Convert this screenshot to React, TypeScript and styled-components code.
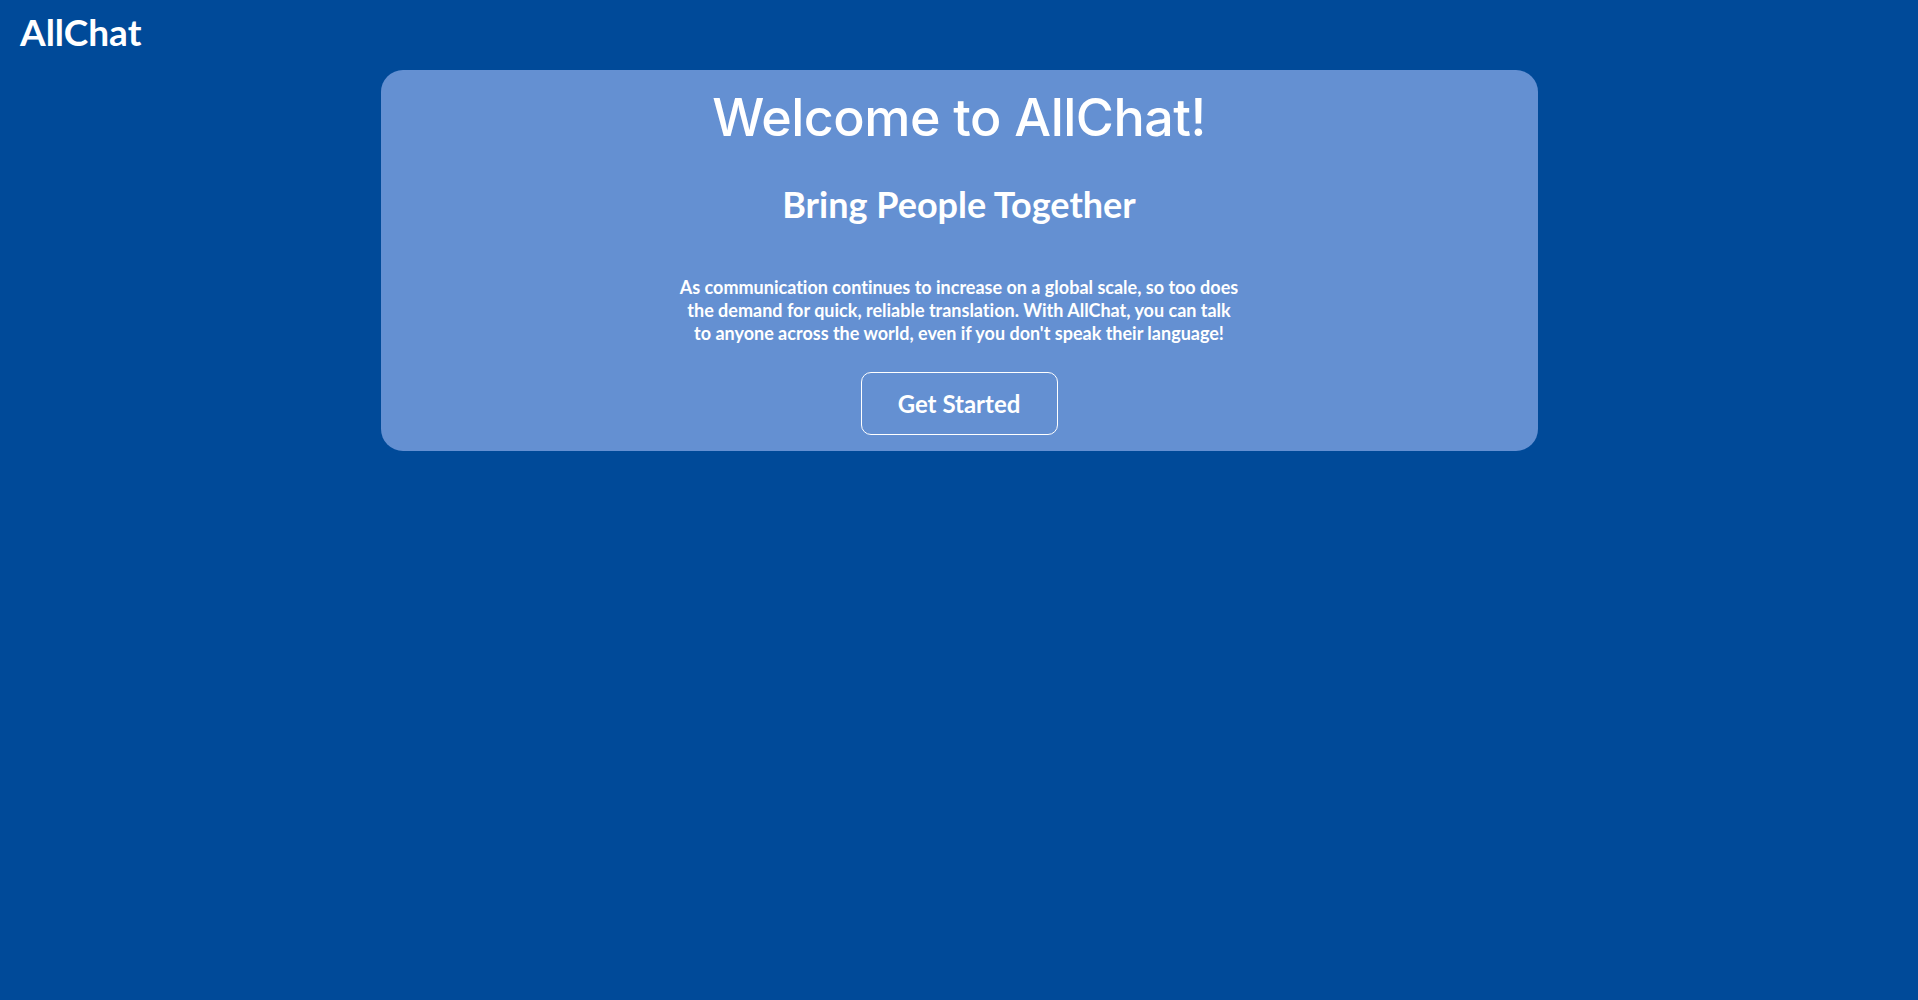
import React from "react";
import styled, { createGlobalStyle } from "styled-components";

const Global = createGlobalStyle`
  html, body {
    margin: 0;
    padding: 0;
    background: #004a99;
    min-height: 100%;
  }
  body {
    font-family: Lato, "Liberation Sans", sans-serif;
    color: #ffffff;
    font-variant-ligatures: none;
  }
`;

const Page = styled.div`
  min-height: 1000px;
  background: #004a99;
  display: flex;
  flex-direction: column;
`;

const Header = styled.header`
  height: 70px;
  display: flex;
  align-items: flex-start;
  padding: 10px 20px 0;
  box-sizing: border-box;
`;

const Logo = styled.div`
  font-family: Lato, sans-serif;
  font-weight: 700;
  font-size: 37px;
  line-height: 44px;
  color: #ffffff;
`;

const Card = styled.main`
  width: 1157px;
  margin: 0 auto;
  box-sizing: border-box;
  background: #6490d2;
  border-radius: 22px;
  display: flex;
  flex-direction: column;
  align-items: center;
  padding: 12px 0 16px;
`;

const Title = styled.h1`
  margin: 0;
  font-family: Inter, "Noto Sans", sans-serif;
  font-weight: 500;
  font-size: 52px;
  line-height: 72px;
  color: #ffffff;
  letter-spacing: -0.5px;
`;

const Subtitle = styled.h2`
  margin: 28px 0 0;
  font-family: Lato, sans-serif;
  font-weight: 700;
  font-size: 36px;
  line-height: 44px;
`;

const Body = styled.p`
  margin: 50px 0 0;
  max-width: 563px;
  text-align: center;
  font-family: Lato, sans-serif;
  font-weight: 700;
  font-size: 18px;
  line-height: 23px;
`;

const Button = styled.button`
  margin-top: 27px;
  width: 197px;
  height: 63px;
  background: transparent;
  border: 1px solid #ffffff;
  border-radius: 10px;
  color: #ffffff;
  font-family: Lato, sans-serif;
  font-weight: 700;
  font-size: 24px;
  font-variant-ligatures: none;
  cursor: pointer;
`;

export default function App() {
  return (
    <>
      <Global />
      <Page>
        <Header>
          <Logo>AllChat</Logo>
        </Header>
        <Card>
          <Title>Welcome to AllChat!</Title>
          <Subtitle>Bring People Together</Subtitle>
          <Body>
            As communication continues to increase on a global scale, so too does
            the demand for quick, reliable translation. With AllChat, you can talk
            to anyone across the world, even if you don't speak their language!
          </Body>
          <Button>Get Started</Button>
        </Card>
      </Page>
    </>
  );
}
